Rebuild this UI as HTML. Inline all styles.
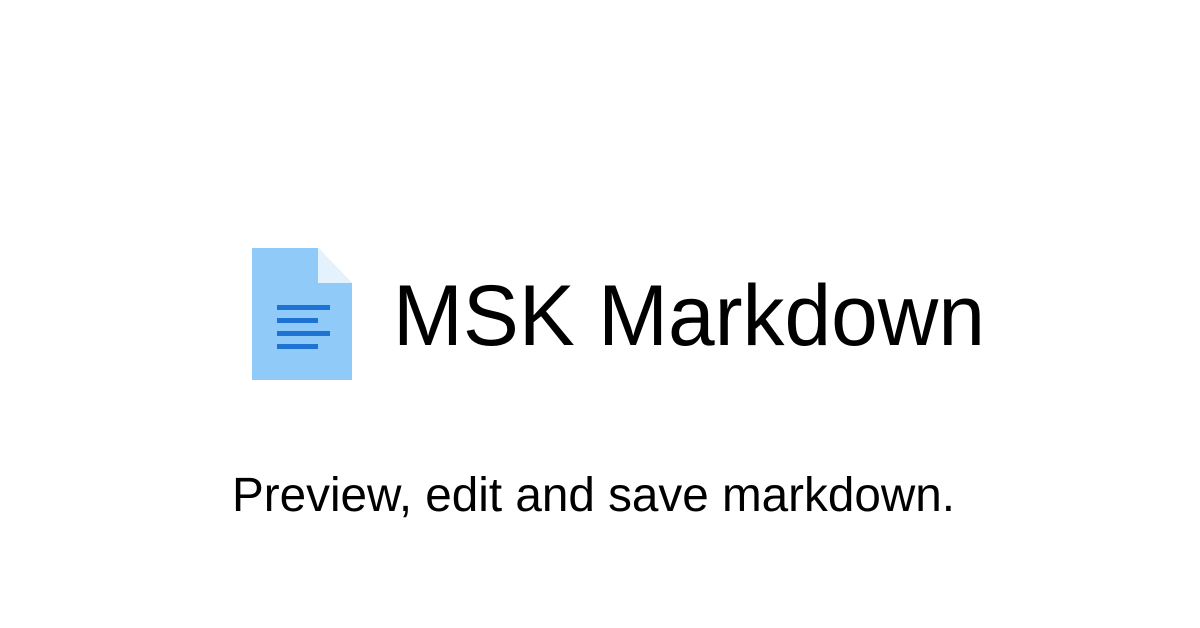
<!DOCTYPE html>
<html><head><meta charset="utf-8"><style>
html,body{margin:0;padding:0;background:#fff;width:1200px;height:628px;overflow:hidden}
</style></head><body>
<svg width="1200" height="628" viewBox="0 0 1200 628" xmlns="http://www.w3.org/2000/svg">
<path d="M252 248 H318 L352 283 V380 H252 Z" fill="#90caf9"/>
<path d="M318 248 L352 283 H318 Z" fill="#e3f2fd"/>
<rect x="277" y="305" width="53" height="5" fill="#1e72d4"/>
<rect x="277" y="318" width="41" height="5" fill="#1e72d4"/>
<rect x="277" y="331" width="53" height="5" fill="#1e72d4"/>
<rect x="277" y="344" width="41" height="5" fill="#1e72d4"/>
<text x="393" y="345" font-family="Liberation Sans, sans-serif" font-size="86" fill="#000" textLength="592" lengthAdjust="spacingAndGlyphs">MSK Markdown</text>
<text x="232" y="511" font-family="Liberation Sans, sans-serif" font-size="48" fill="#000" textLength="723" lengthAdjust="spacingAndGlyphs">Preview, edit and save markdown.</text>
</svg>
</body></html>
